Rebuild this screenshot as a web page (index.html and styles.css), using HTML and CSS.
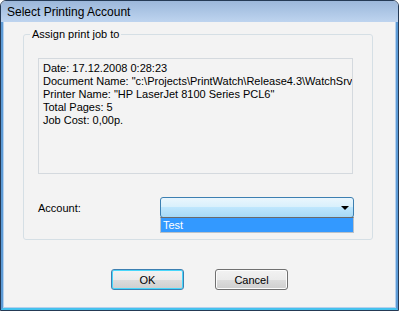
FILE: index.html
```html
<!DOCTYPE html>
<html lang="en">
<head>
  <meta charset="UTF-8">
  <title>Select Printing Account</title>
  <link rel="stylesheet" href="styles.css">
</head>
<body>
  <div class="window">
    <div class="titlebar">Select Printing Account</div>
    <div class="client">
      <fieldset class="group">
        <legend>Assign print job to</legend>
        <div class="jobinfo">
          <div>Date: 17.12.2008 0:28:23</div>
          <div>Document Name: "c:\Projects\PrintWatch\Release4.3\WatchSrv\Bin\Debug\test.txt"</div>
          <div>Printer Name: "HP LaserJet 8100 Series PCL6"</div>
          <div>Total Pages: 5</div>
          <div>Job Cost: 0,00p.</div>
        </div>
        <div class="account-row">
          <label class="account-label">Account:</label>
          <div class="combo">
            <span class="combo-arrow"></span>
            <div class="combo-list">
              <div class="combo-item">Test</div>
            </div>
          </div>
        </div>
      </fieldset>
      <div class="buttons">
        <button class="btn btn-default">OK</button>
        <button class="btn">Cancel</button>
      </div>
    </div>
  </div>
</body>
</html>
```

FILE: styles.css
```css
html, body { margin: 0; padding: 0; background: #fff; }
body { font-family: 'Liberation Sans', Arial, sans-serif; font-size: 11px; color: #000; }

.window {
  width: 399px; height: 311px; box-sizing: border-box;
  display: flex; flex-direction: column;
  border: 1px solid #253a55; border-radius: 6px 6px 0 0;
  background: #f3f3f3; overflow: hidden;
}
.titlebar {
  height: 21px; box-sizing: border-box; flex: none;
  padding: 3px 0 0 6px; font-size: 12px; line-height: 16px;
  background: linear-gradient(#9cb7da 0%, #a9c3e3 40%, #bed4ef 100%);
}
.client {
  flex: 1; display: flex; flex-direction: column;
  border-left: 2px solid #5d9bd6; border-right: 2px solid #5d9bd6; border-bottom: 2px solid #44c2ee;
  box-shadow: inset 1px 0 0 #b6d0ec, inset -1px 0 0 #b6d0ec, inset 0 -1px 0 #b6d0ec;
}

.group {
  margin: 6px 0 0 20px; padding: 17px 0 21px 14px;
  width: 350px; box-sizing: border-box;
  border: 1px solid #d5dfe5; border-radius: 3px;
}
.group legend { margin-left: -8px; padding: 0 2px; line-height: 13px; }

.jobinfo {
  width: 315px; height: 116px; box-sizing: border-box;
  border: 1px solid #d4d9de; padding: 3px 0 0 4px;
  line-height: 13px; white-space: nowrap; overflow: hidden;
}

.account-row { display: flex; align-items: center; margin-top: 23px; }
.account-label { width: 122px; }
.combo {
  position: relative; width: 194px; height: 21px; box-sizing: border-box;
  border: 1px solid #3c7fb1; border-radius: 3px;
  background: linear-gradient(#eaf6fd 0%, #d9f0fc 45%, #bee6fd 50%, #a7d9f5 100%);
}
.combo-arrow {
  position: absolute; right: 4px; top: 8px;
  border-left: 4px solid transparent; border-right: 4px solid transparent; border-top: 4px solid #000;
}
.combo-list {
  position: absolute; left: -1px; right: -1px; top: 100%;
  border: 1px solid #b9c1c9; border-top: 1px solid #6a6a6a; background: #fff;
}
.combo-item { height: 14px; line-height: 14px; padding-left: 2px; background: #3399ff; color: #fff; }

.buttons { display: flex; justify-content: center; gap: 31px; margin-top: 29px; }
.btn {
  width: 73px; height: 21px; padding: 0;
  font-family: inherit; font-size: 11px; color: #000;
  border: 1px solid #707070; border-radius: 3px;
  background: linear-gradient(#f2f2f2 0%, #ebebeb 50%, #dddddd 51%, #cfcfcf 100%);
  box-shadow: inset 0 0 0 1px #fcfcfc;
}
.btn-default { border-color: #3c7fb1; box-shadow: inset 0 0 0 1px #48d7fb; }
```
